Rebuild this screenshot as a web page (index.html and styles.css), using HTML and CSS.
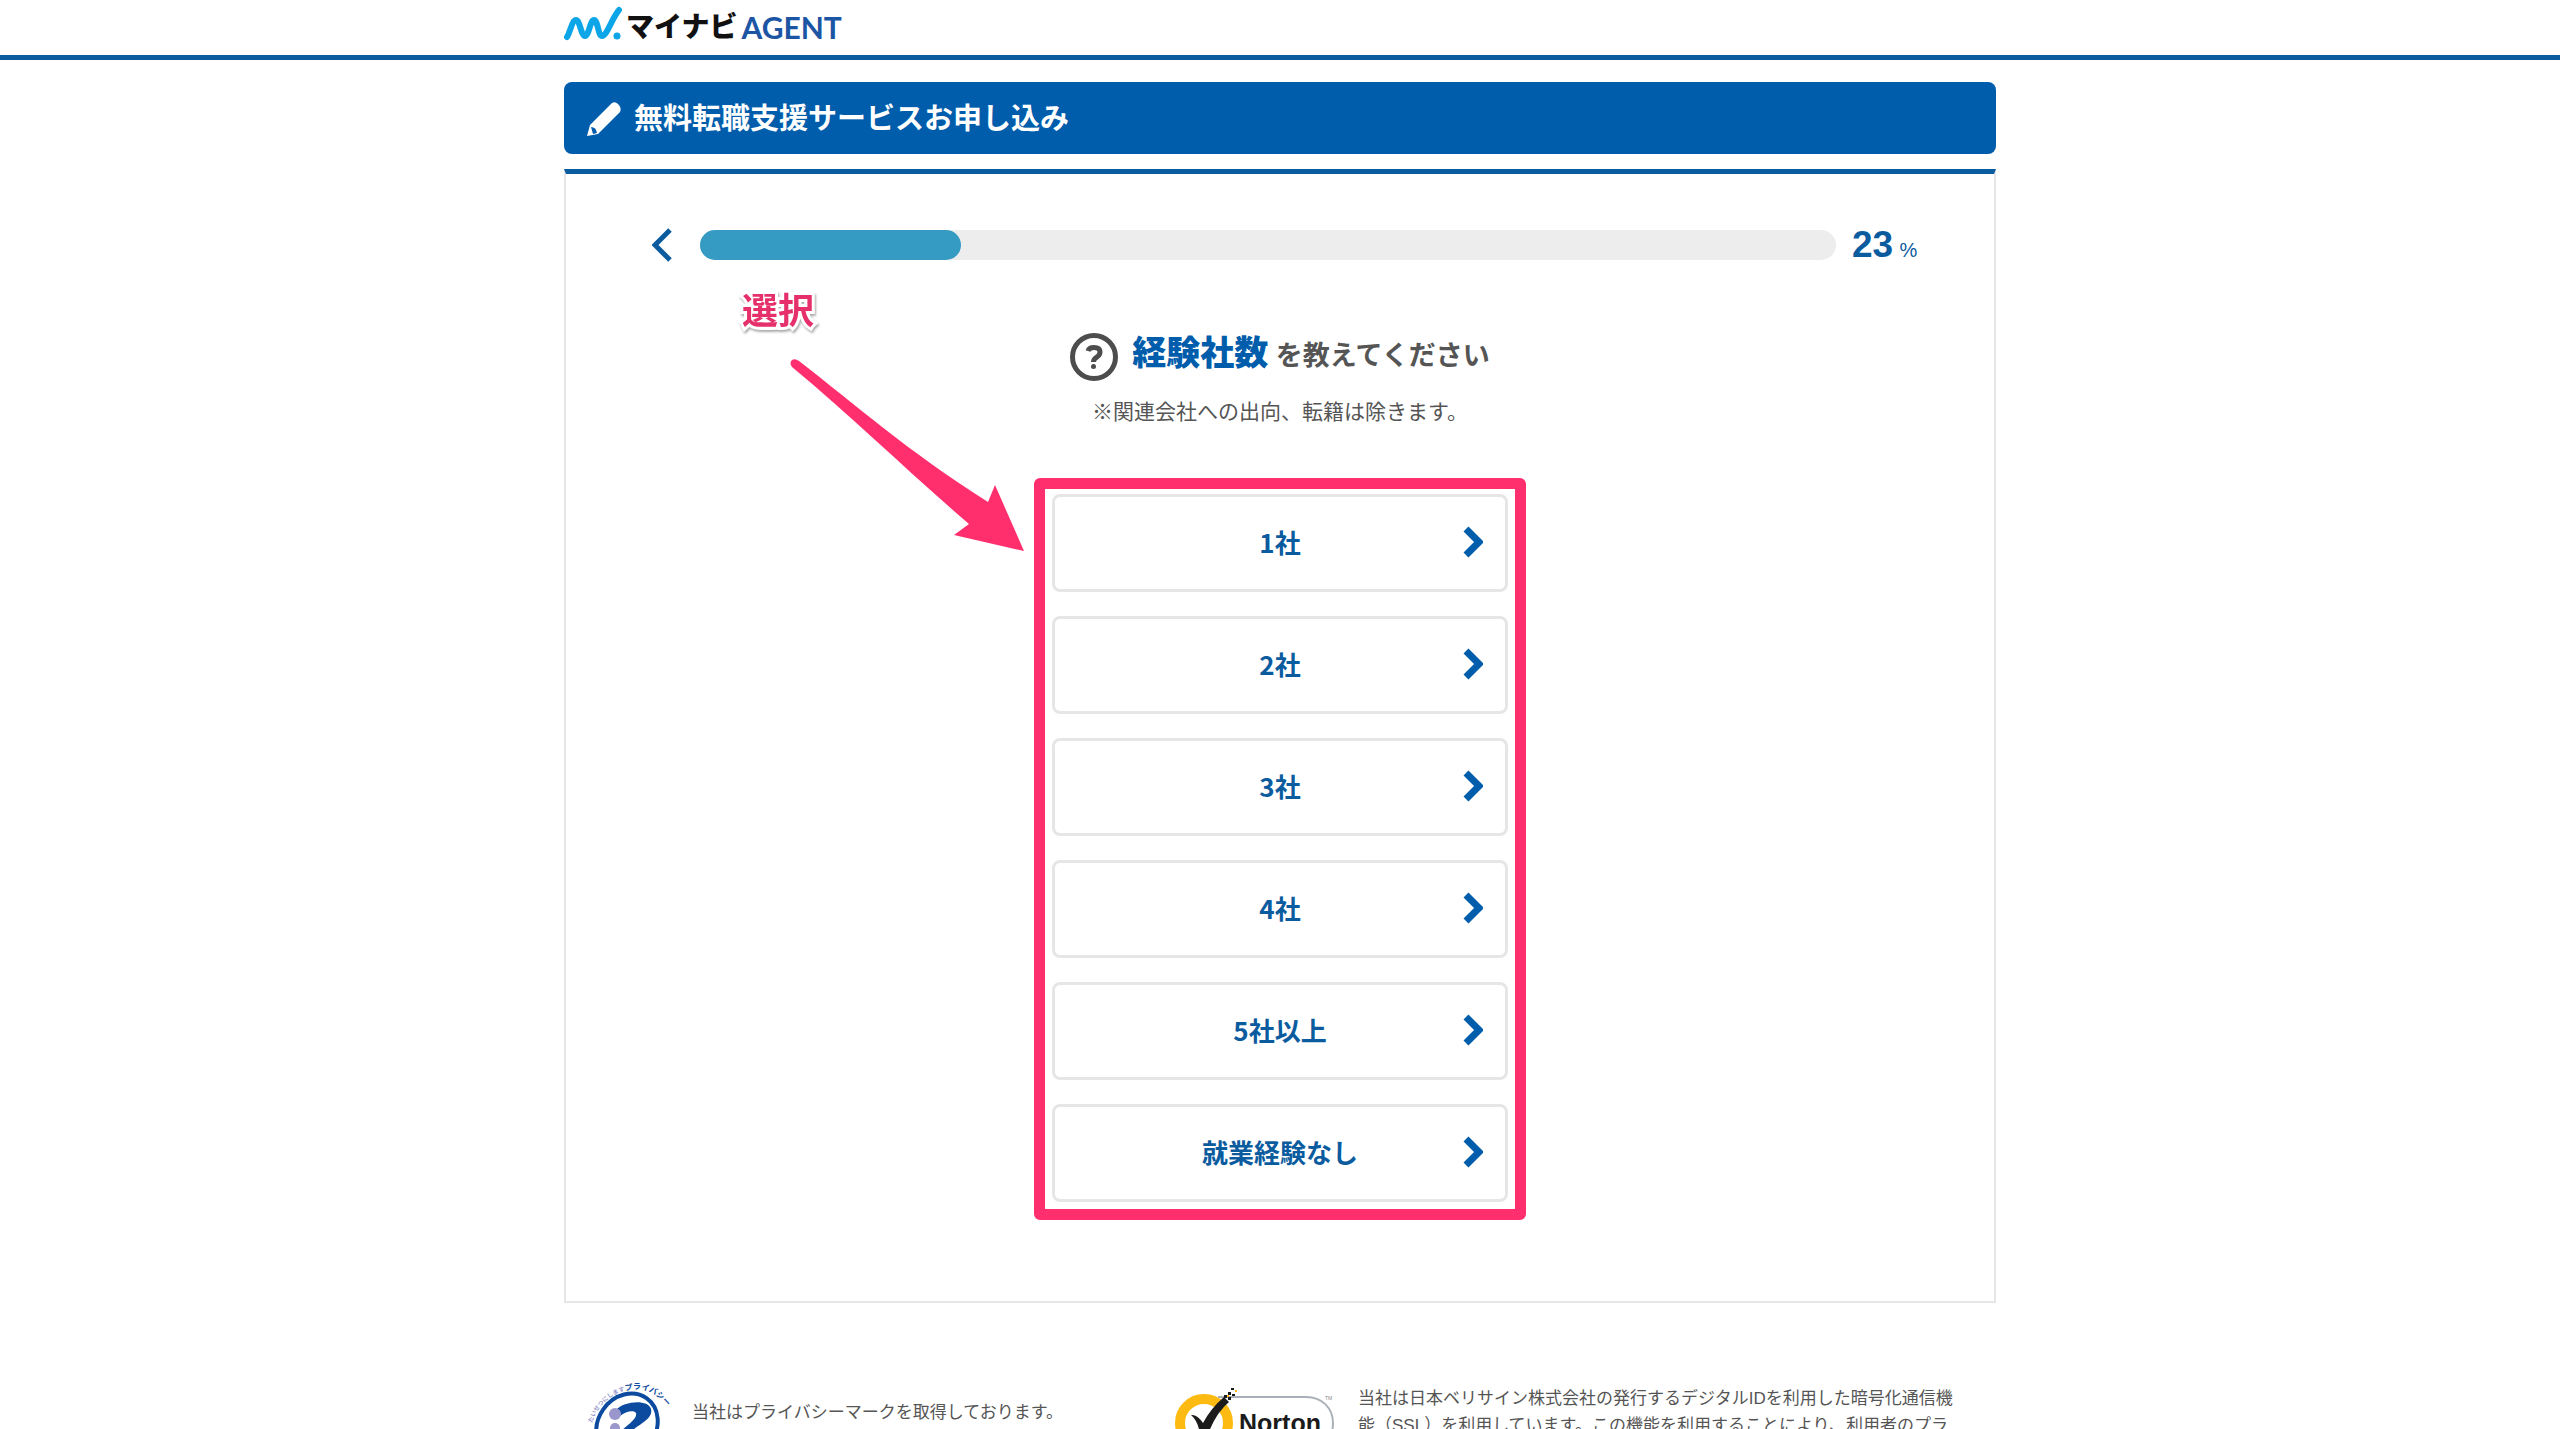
FILE: index.html
```html
<!DOCTYPE html>
<html lang="ja">
<head>
    <meta charset="UTF-8">
    <title>無料転職支援サービスお申し込み | マイナビAGENT</title>
    <link rel="stylesheet" href="styles.css">
</head>
<body>

    <header class="header">
        <div class="container">
            <a class="logo" href="#" aria-label="マイナビAGENT">
                <svg class="logo-mark" viewBox="0 0 58 36" aria-hidden="true">
                    <path d="M3 32 C6 28 8 15 12 15 C16 15 17 31 21 31 C25 31 26 15 30 15 C34 15 34 31 38 31 C43 31 48 13 55 5" />
                    <circle cx="53" cy="31" r="3.500" />
                </svg>
                <span class="logo-name">マイナビ</span>
                <span class="logo-agent">AGENT</span>
            </a>
        </div>
    </header>

    <main class="container">
        <h1 class="title">
            <svg class="title-icon" viewBox="0 0 36 36" aria-hidden="true">
                <path d="M1 35 L4 24 L26 2 Q29 0 32 3 Q36 7 34 11 L12 33 Z" fill="#fff" />
                <path d="M5 26 Q10 26 11 32 L7 33 Z" fill="#005dac" />
            </svg>
            無料転職支援サービスお申し込み
        </h1>

        <section class="panel">
            <!-- Progress -->
            <div class="progress">
                <button class="back" type="button" aria-label="戻る">
                    <svg viewBox="0 0 20 34" aria-hidden="true"><path d="M18 2 L3 17 L18 32" /></svg>
                </button>
                <div class="bar"><div class="bar-fill" style="width: 23%"></div></div>
                <p class="percent">23 <small>%</small></p>
            </div>

            <h2 class="question">
                <svg class="question-icon" viewBox="0 0 48 48" aria-hidden="true">
                    <circle cx="24" cy="24" r="21.500" />
                    <path d="M18 18 Q19 14.500 24 14.500 Q30 14.500 30 19 Q30 22 27 24 Q23.500 26 23.500 29" />
                    <circle class="dot" cx="23.500" cy="33.500" r="2.500" />
                </svg>
                <span class="question-text"><strong>経験社数</strong> を教えてください</span>
            </h2>
            <p class="note">※関連会社への出向、転籍は除きます。</p>

            <div class="options">
                <button class="option" type="button">1社<svg viewBox="0 0 20 32" aria-hidden="true"><path d="M3 3 L16 16 L3 29" /></svg></button>
                <button class="option" type="button">2社<svg viewBox="0 0 20 32" aria-hidden="true"><path d="M3 3 L16 16 L3 29" /></svg></button>
                <button class="option" type="button">3社<svg viewBox="0 0 20 32" aria-hidden="true"><path d="M3 3 L16 16 L3 29" /></svg></button>
                <button class="option" type="button">4社<svg viewBox="0 0 20 32" aria-hidden="true"><path d="M3 3 L16 16 L3 29" /></svg></button>
                <button class="option" type="button">5社以上<svg viewBox="0 0 20 32" aria-hidden="true"><path d="M3 3 L16 16 L3 29" /></svg></button>
                <button class="option" type="button">就業経験なし<svg viewBox="0 0 20 32" aria-hidden="true"><path d="M3 3 L16 16 L3 29" /></svg></button>
            </div>

            <!-- Guide over the panel -->
            <div class="guide">
                <span class="guide-label">選択</span>
                <svg class="guide-arrow" viewBox="0 0 240 200" aria-hidden="true">
                    <path d="M6 12 Q3 8 6 5 Q9 3 13 6 C70 50 120 95 202 147 L209 130 L238 196 L168 180 L183 169 C120 115 70 65 6 12 Z" />
                </svg>
            </div>
        </section>
    </main>

    <footer class="container footer">
        <div class="trust privacy">
            <svg class="privacy-mark" viewBox="0 0 84 100" aria-hidden="true">
                <defs><path id="arc" d="M6 45 C11 27 28 13 45 12 C59 9 72 16 84 32" /></defs>
                <text class="arc-text"><textPath href="#arc"><tspan class="arc-light">たいせつにします</tspan><tspan class="arc-dark">プライバシー</tspan></textPath></text>
                <ellipse cx="41" cy="48" rx="29" ry="34" transform="rotate(35 41 48)" fill="none" stroke="#0b4a9e" stroke-width="4" />
                <path d="M30 32 C38 23 62 21 65 31 C68 43 48 47 36 62 H28 C34 50 52 43 50 35 C48 32 40 33 34 38 Z" fill="#0b4a9e" />
                <circle cx="29" cy="36" r="6" fill="#9a97cc" />
                <circle cx="29" cy="50" r="5" fill="#9a97cc" />
            </svg>
            <p class="privacy-text">当社はプライバシーマークを取得しております。</p>
        </div>
        <div class="trust norton">
            <svg class="norton-mark" viewBox="0 0 162 80" aria-hidden="true">
                <path d="M44 10 H132 C148 10 159 21 159 36 C159 52 148 64 132 64 H30" fill="none" stroke="#a9b0b8" stroke-width="2" />
                <circle cx="30" cy="36" r="24" fill="#fff" stroke="#fdbb12" stroke-width="10" />
                <path d="M17 28 Q23 27 29 36 Q37 21 50 10 L55 15 Q42 26 34 47 H26 Q24 34 17 28 Z" fill="#1b1b1b" />
                <path d="M50 8 h3 v3 h-3z M54 10 h3 v3 h-3z M54 5 h3 v3 h-3z M58 7 h3 v2 h-3z M57 1 h3 v2 h-3z M49 14 h4 v3 h-4z" fill="#1b1b1b" />
                <path d="M61 3 h2 v2 h-2z M53 8 h2 v2 h-2z" fill="#fdbb12" />
                <text x="65" y="45" class="norton-name">Norton</text>
                <text x="151" y="13" class="norton-tm">TM</text>
            </svg>
            <p>当社は日本ベリサイン株式会社の発行するデジタルIDを利用した暗号化通信機能（SSL）を利用しています。この機能を利用することにより、利用者のプラ</p>
        </div>
    </footer>

</body>
</html>
```

FILE: styles.css
```css
* {
    box-sizing: border-box;
}

body {
    height: 100vh;
    margin: 0;
    overflow: hidden;
    font-family: "Liberation Sans", "Noto Sans CJK JP", sans-serif;
    color: #555;
    background: #fff;
}

h1, h2, p {
    margin: 0;
}

.container {
    width: 100%;
    max-width: 1432px;
    margin: 0 auto;
}

/* Header */
.header {
    height: 60px;
    border-bottom: 5px solid #0b5c9f;
}

.logo {
    display: flex;
    align-items: flex-end;
    height: 45px;
    text-decoration: none;
}

.logo-mark {
    width: 58px;
    height: 36px;
    margin: 0 4px 4px 0;
    fill: #0ba5e8;
}

.logo-mark path {
    fill: none;
    stroke: #0ba5e8;
    stroke-width: 6;
    stroke-linecap: round;
}

.logo-name {
    font: 900 28px/40px "Noto Sans CJK JP", sans-serif;
    color: #111;
}

.logo-agent {
    margin-left: 4px;
    font: bold 30px/36px Lato, sans-serif;
    color: #1d55a5;
}

.title {
    display: flex;
    align-items: center;
    gap: 12px;
    height: 72px;
    margin: 22px 0 15px;
    padding: 2px 22px 0;
    border-radius: 8px;
    background: #005dac;
    color: #fff;
    font-size: 29px;
    line-height: 40px;
}

.title-icon {
    width: 36px;
    height: 36px;
}

/* Panel */
.panel {
    position: relative;
    padding: 56px 0 81px;
    border: 2px solid #e6e6e6;
    border-top: 5px solid #0b5c9f;
}

.progress {
    display: flex;
    align-items: center;
    height: 30px;
    padding: 0 58px 0 86px;
}

.back {
    width: 20px;
    height: 34px;
    margin-right: 28px;
    padding: 0;
    border: 0;
    background: none;
    cursor: pointer;
}

.back svg {
    display: block;
    fill: none;
    stroke: #0b5c9f;
    stroke-width: 5;
}

.bar {
    flex: 1;
    height: 30px;
    border-radius: 15px;
    background: #ededed;
}

.bar-fill {
    height: 100%;
    border-radius: 15px;
    background: #359bc2;
}

.percent {
    width: 84px;
    margin-left: 16px;
    padding-top: 4px;
    color: #0b5c9f;
    font-size: 37px;
    font-weight: bold;
    line-height: 30px;
    white-space: nowrap;
}

.percent small {
    margin-left: -4px;
    font-size: 20px;
    font-weight: normal;
}

.question {
    display: flex;
    justify-content: center;
    align-items: center;
    gap: 14px;
    height: 48px;
    margin-top: 73px;
    font-size: 27px;
    line-height: 44px;
}

.question-text {
    padding-bottom: 6px;
}

.question strong {
    color: #005dac;
    font-size: 34px;
}

.question-icon {
    width: 48px;
    height: 48px;
    fill: none;
    stroke: #4d4d4d;
    stroke-width: 5;
}

.question-icon .dot {
    fill: #4d4d4d;
    stroke: none;
}

.note {
    margin: 15px 0 50px;
    font-size: 21px;
    line-height: 32px;
    text-align: center;
}

.options {
    display: flex;
    flex-direction: column;
    gap: 24px;
    width: 492px;
    margin: 0 auto;
    padding: 5px 7px 7px;
    border: 11px solid #ff2f6e;
    border-radius: 6px;
}

.option {
    position: relative;
    height: 98px;
    padding-bottom: 4px;
    border: 3px solid #e6e6e6;
    border-radius: 8px;
    background: #fff;
    color: #0b5c9f;
    font: bold 26px/40px "Noto Sans CJK JP", sans-serif;
    cursor: pointer;
}

.option svg {
    position: absolute;
    top: 29px;
    right: 22px;
    width: 20px;
    height: 32px;
    fill: none;
    stroke: #005dac;
    stroke-width: 7;
}

/* Guide */
.guide {
    position: absolute;
    top: 112px;
    left: 176px;
}

.guide-label {
    color: #e6306b;
    font-size: 36px;
    font-weight: bold;
    line-height: 52px;
    -webkit-text-stroke: 6px #fff;
    paint-order: stroke fill;
    filter: drop-shadow(1px 2px 1px #aaa);
}

.guide-arrow {
    position: absolute;
    top: 69px;
    left: 44px;
    width: 240px;
    height: 200px;
    fill: #ff2f6e;
}

/* Footer */
.footer {
    display: flex;
    padding: 75px 22px 0;
}

.trust {
    display: flex;
    font-size: 17px;
    line-height: 27px;
}

.privacy {
    width: 588px;
    gap: 22px;
}

.privacy-mark {
    width: 84px;
    height: 100px;
    overflow: visible;
}

.privacy-text {
    padding-top: 21px;
}

.arc-text {
    font: bold 6px "Noto Sans CJK JP", sans-serif;
}

.arc-light {
    fill: #9a97cc;
}

.arc-dark {
    fill: #0b4a9e;
    font-size: 8px;
}

.norton {
    flex: 1;
    gap: 22px;
}

.norton p {
    width: 600px;
    padding-top: 7px;
}

.norton-mark {
    flex: none;
    width: 162px;
    height: 80px;
    margin-top: 9px;
}

.norton-name {
    font: bold 25px "Liberation Sans", sans-serif;
    fill: #1b1b1b;
}

.norton-tm {
    font: 5px "Liberation Sans", sans-serif;
    fill: #888;
}
```
